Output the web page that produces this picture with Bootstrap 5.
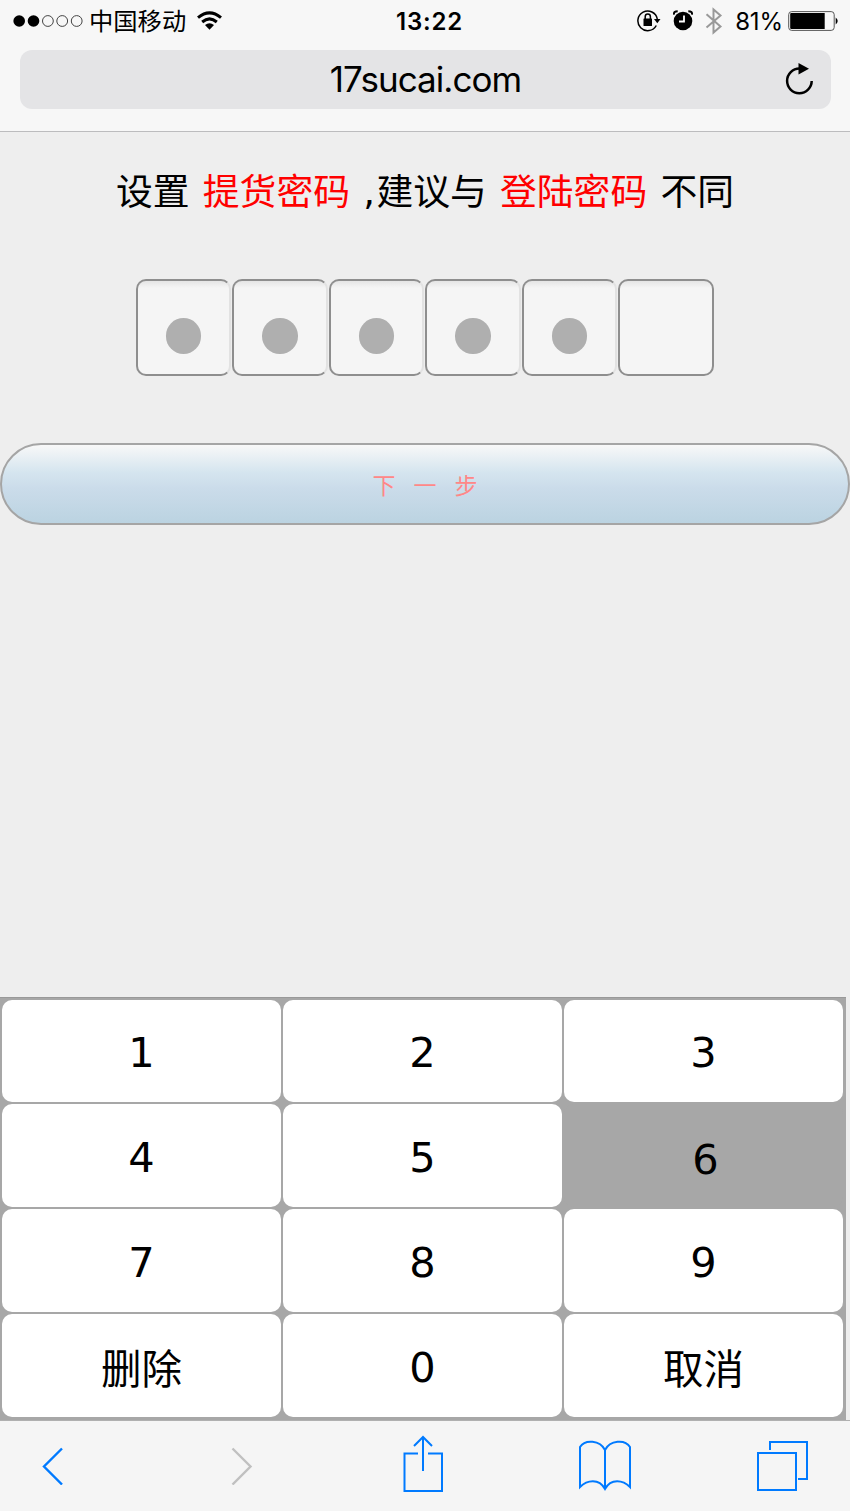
<!DOCTYPE html>
<html lang="zh-CN">
<head>
<meta charset="utf-8">
<meta name="viewport" content="width=device-width, initial-scale=1">
<title>17sucai.com</title>
<link href="https://cdn.jsdelivr.net/npm/bootstrap@5.3.0/dist/css/bootstrap.min.css" rel="stylesheet">
<style>
body{height:1511px;background:#eee;color:#000;overflow:hidden;font-family:"DejaVu Sans","Noto Sans CJK SC",sans-serif}
svg{display:block;flex:none}
.browser-head{height:132px;background:#f7f7f7;border-bottom:1px solid #bcbcbe;font-family:Inter,"Noto Sans CJK SC",sans-serif}
.status{height:42px;font-size:24px;line-height:42px;padding:0 11px 0 13px}
.status>div{flex:1 1 0}
.carrier{font-size:24.3px;margin-left:6px}
.clock{font-weight:600;font-size:24px;letter-spacing:.85px;padding:2px 0 0 7px}
.rotation{margin-right:12px}
.bluetooth{margin:0 12px}
.percent{padding-top:2px;letter-spacing:-.1px}
.battery{margin-left:5px}
.address{height:59px;margin:8px 19px 0 20px;border-radius:12px;background:#e4e4e6;font-size:35px;letter-spacing:-.95px;line-height:59px}
.reload{right:15px;top:10px}
.tip{margin-top:34px;height:54px;line-height:54px;font-size:36.8px;word-spacing:1.5px;white-space:pre}
.tip b{font-weight:400;color:#f00}
.tip i{font-style:normal;letter-spacing:1.5px}
.pins{margin-top:59px;padding-left:135.5px}
.pin{width:95.5px;height:97px;margin-right:1px;border:2px solid #8e8e8e;border-right-color:#e2e2e2;border-radius:10px;background:linear-gradient(#e5e5e5,#f5f5f5 7px);padding-top:17px}
.pin:last-child{border-right-color:#8e8e8e;width:96px}
.pin span{width:35.5px;height:35.5px;border-radius:50%;background:#afafaf}
.next{height:82px;margin-top:67px;border:2px solid #a5a5a5;border-radius:41px;background:linear-gradient(#f8f8f8,#d5e5ef 35%,#cbdcea 55%,#bbd3e1);color:#ff8787;font:400 23px "Noto Sans CJK SC",sans-serif;word-spacing:12.9px;padding:0 0 1px}
.keypad{display:grid;width:846px;height:423px;grid-template:repeat(4,1fr)/repeat(3,1fr);gap:2px;padding:1.5px 3px 3.5px 2px;background:#a7a7a7;border-top:1px solid #999}
.key{border:0;border-radius:10px;background:#fff;color:#000;font-size:41.5px;line-height:50px;padding:5px 0 0}
.key.held{background:#a7a7a7;padding:9px 0 0 4px}
.key.cn{font-family:"Noto Sans CJK SC",sans-serif;font-size:40.5px;padding-top:3px}
.toolbar{height:91px;background:#f5f5f5;border-top:1px solid #b0b0b0;padding-left:42px}
.toolbar svg{fill:none;stroke:#007aff;stroke-width:2}
.toolbar .forward{stroke:#c0c0c0;margin-left:167px}
.share{margin:0 135px 5px 150px}
.tabs{margin-left:124px}
</style>
</head>
<body class="d-flex flex-column">
<header class="browser-head flex-shrink-0">
  <div class="status d-flex align-items-center">
    <div class="d-flex align-items-center">
      <svg width="70" height="14" viewBox="0 0 70 14"><circle cx="6.2" cy="7" r="5.8"/><circle cx="20.5" cy="7" r="5.8"/><g fill="none" stroke="#444" stroke-width="1"><circle cx="34.9" cy="7" r="5.4"/><circle cx="49.2" cy="7" r="5.4"/><circle cx="63.7" cy="7" r="5.4"/></g></svg>
      <span class="carrier">中国移动</span>
      <svg class="ms-2" width="30" height="22" viewBox="0 0 30 22"><g fill="none" stroke="#000" stroke-width="3"><path d="M4 7.700Q15.500 -2 27 7.700"/><path d="M8.200 12Q15.500 5.700 22.800 12"/></g><path d="M11 15Q15.500 11.500 20 15L15.500 19.700z"/></svg>
    </div>
    <span class="clock">13:22</span>
    <div class="d-flex align-items-center justify-content-end">
      <svg class="rotation" width="24" height="24" viewBox="0 0 24 24"><path d="M19.300 16.500A9.800 9.800 0 1 1 20.300 10" fill="none" stroke="#000" stroke-width="1.500"/><path d="M17 10h6.500l-3.200 4.200z"/><rect x="6.500" y="9.500" width="8.500" height="7.500" rx=".5"/><path d="M8.200 10.500V7.700a2.600 2.600 0 0 1 5.200 0V10.500" fill="none" stroke="#000" stroke-width="1.500"/></svg>
      <svg width="20" height="22" viewBox="0 0 20 22"><circle cx="10" cy="11" r="9.300"/><path d="M11 5.500v6H6" fill="none" stroke="#fff" stroke-width="1.800"/><path d="M1 4.700Q.5 1.200 4.700 1.200M19 4.700Q19.500 1.200 15.300 1.200" fill="none" stroke="#000" stroke-width="2"/></svg>
      <svg class="bluetooth" width="18" height="28" viewBox="0 0 18 28"><path d="M1.500 7.200 15.500 19.500 8.500 25.500V2.500l7 6L1.500 20.500" fill="none" stroke="#999" stroke-width="2"/></svg>
      <span class="percent">81%</span>
      <svg class="battery" width="51" height="22" viewBox="0 0 51 22"><rect x=".7" y="1.600" width="45.500" height="18.800" rx="3" fill="none" stroke="#555"/><path d="M3.200 3h33.500v16H3.200a1 1 0 0 1-1-1V4a1 1 0 0 1 1-1zM47.700 7.500q4 3.500 0 7z"/></svg>
    </div>
  </div>
  <div class="address text-center position-relative">17sucai.com
    <svg class="reload position-absolute" width="34" height="38" viewBox="0 0 34 38"><path d="M29.700 21A12.300 12.300 0 1 1 17.500 8.600" fill="none" stroke="#000" stroke-width="2.500"/><path d="M16.500 3V14.500L27 8.700z"/></svg>
  </div>
</header>
<main class="flex-grow-1">
  <div class="tip text-center">设置 <b>提货密码</b> <i>,</i>建议与 <b>登陆密码</b> 不同</div>
  <div class="pins d-flex">
    <div class="pin d-flex align-items-center justify-content-center"><span></span></div>
    <div class="pin d-flex align-items-center justify-content-center"><span></span></div>
    <div class="pin d-flex align-items-center justify-content-center"><span></span></div>
    <div class="pin d-flex align-items-center justify-content-center"><span></span></div>
    <div class="pin d-flex align-items-center justify-content-center"><span></span></div>
    <div class="pin"></div>
  </div>
  <button class="next d-block w-100">下 一 步</button>
</main>
<section class="keypad flex-shrink-0">
  <button class="key">1</button><button class="key">2</button><button class="key">3</button>
  <button class="key">4</button><button class="key">5</button><button class="key held">6</button>
  <button class="key">7</button><button class="key">8</button><button class="key">9</button>
  <button class="key cn">删除</button><button class="key">0</button><button class="key cn">取消</button>
</section>
<nav class="toolbar d-flex align-items-center flex-shrink-0">
  <svg width="22" height="38" viewBox="0 0 22 38"><path d="M20 1.500 2 19.500 20 37.500" stroke-width="2.400"/></svg>
  <svg class="forward" width="22" height="38" viewBox="0 0 22 38"><path d="M1.500 1.500l18 18-18 18" stroke-width="2.400"/></svg>
  <svg class="share" width="40" height="58" viewBox="0 0 40 58"><path d="M15 18.500H1.500V56H39V18.500H25M20 36V2M11 11l9-9 9 9"/></svg>
  <svg width="54" height="54" viewBox="0 0 54 54"><path d="M27 11C22 1 7 0 2 8v40c7-7 19-9 25 2 6-11 18-9 25-2V8C47 0 32 1 27 11v39"/></svg>
  <svg class="tabs" width="52" height="52" viewBox="0 0 52 52"><path d="M2 13h38v37H2zM14 10V2h37v37h-9"/></svg>
</nav>
<script src="https://cdn.jsdelivr.net/npm/bootstrap@5.3.0/dist/js/bootstrap.bundle.min.js"></script>
</body>
</html>
